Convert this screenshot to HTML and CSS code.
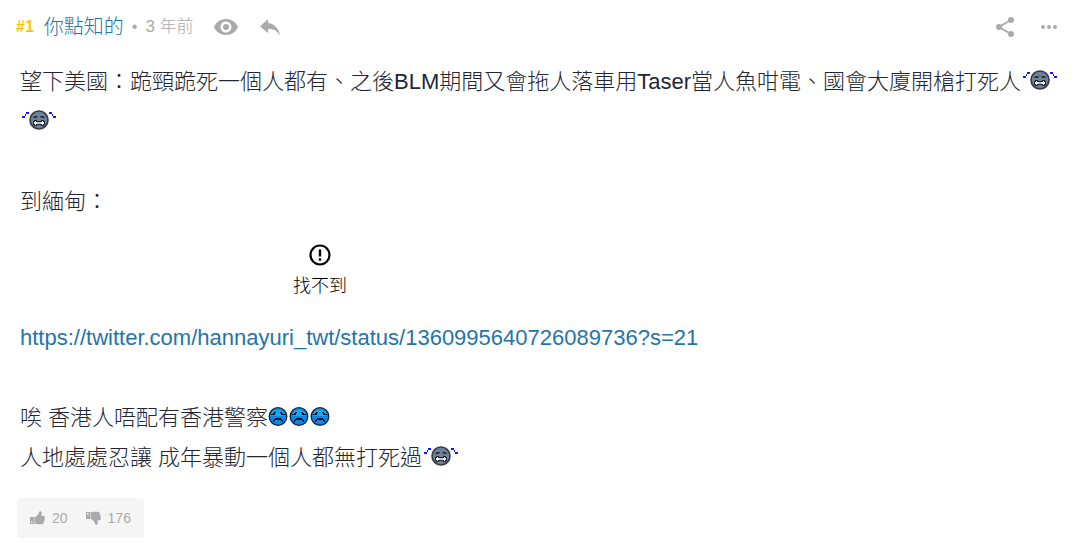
FILE: index.html
```html
<!DOCTYPE html>
<html lang="zh-HK">
<head>
    <meta charset="UTF-8">
    <meta name="viewport" content="width=device-width, initial-scale=1.0">
    <title>你點知的</title>
    <link rel="stylesheet" href="styles.css">
</head>
<body>

<!-- shared smileys -->
<svg class="sprite" aria-hidden="true">
    <symbol id="cry" viewBox="0 0 35 20">
        <g fill="#1414ff">
            <path d="M4 2h3v2H4zM0 6h3v2H0zM3 4h1v2H3zM27 2h3v2h-3zM31 6h3v2h-3zM30 4h1v2h-1z"/>
        </g>
        <circle cx="17" cy="10" r="9" fill="#6e819c" stroke="#343a42" stroke-width="1.6"/>
        <g>
            <path fill="#30363f" d="M12 6h4v1h-1v1h-4v-1h1zM18 6h4v1h1v1h-4v-1h-1z"/>
            <path fill="#20242a" d="M12 10h3v1h4v-1h3v1h1v4h-1v1h-3v-1h-4v1h-3v-1h-1v-4h1z"/>
            <path fill="#fff" d="M13 11h1v1h1v2h-1v1h-1v-1h-1v-2h1zM20 11h1v1h1v2h-1v1h-1v-1h-1v-2h1z"/>
            <path fill="#c4c8cc" d="M15 12h4v2h-4z"/>
        </g>
    </symbol>
    <symbol id="sad" viewBox="0 0 20 19">
        <circle cx="10" cy="9.5" r="8.8" fill="#0a86ea" stroke="#142434" stroke-width="1.3"/>
        <path fill="#10aaf6" d="M4 5q6-5 12 0l1 4h-14z"/>
        <g fill="#07121e">
            <path d="M6 5h2v1h-1v1h-2v1h-2v-1h2v-1h1zM12 5h2v1h1v1h2v1h-2v-1h-2v-1h-1zM5 7h2v1h-2zM13 7h2v1h-2z"/>
            <path d="M7 11h6v1h1v1h1v2h-1v-1h-1v-1h-6v1h-1v1h-1v-2h1v-1h1z"/>
        </g>
    </symbol>
</svg>

<article class="post">
    <header class="post-header">
        <span class="post-number">#1</span>
        <a class="post-author" href="#">你點知的</a>
        <span class="dot">•</span>
        <span class="post-time">3 年前</span>
        <button class="icon-btn view-btn" type="button" aria-label="只看此用戶">
            <svg width="24" height="18" viewBox="0 0 24 18">
                <path fill="currentColor" fill-rule="evenodd" d="M12 1C6.500 1 2 4.200 0 9c2 4.800 6.500 8 12 8s10-3.200 12-8C22 4.200 17.500 1 12 1zm0 13.500a5.500 5.500 0 1 1 0-11 5.500 5.500 0 0 1 0 11zM12 6a3 3 0 1 0 0 6 3 3 0 0 0 0-6z"/>
            </svg>
        </button>
        <button class="icon-btn" type="button" aria-label="回覆">
            <svg width="20" height="17" viewBox="0 0 20 17">
                <path fill="currentColor" d="M8 4V0L0 7.500 8 14v-4c5-.3 9 1.500 12 6.500C19 10.500 15.500 5 8 4z"/>
            </svg>
        </button>
        <div class="header-tools">
            <button class="icon-btn" type="button" aria-label="分享">
                <svg width="20" height="20" viewBox="0 0 20 20">
                    <path fill="none" stroke="currentColor" stroke-width="2" d="M16 3L4 10l12 7"/>
                    <g fill="currentColor"><circle cx="16" cy="3" r="3"/><circle cx="4" cy="10" r="3"/><circle cx="16" cy="17" r="3"/></g>
                </svg>
            </button>
            <button class="icon-btn" type="button" aria-label="更多">
                <svg width="16" height="4" viewBox="0 0 16 4" fill="currentColor">
                    <circle cx="2" cy="2" r="2"/><circle cx="8" cy="2" r="2"/><circle cx="14" cy="2" r="2"/>
                </svg>
            </button>
        </div>
    </header>

    <div class="post-body">
        <p>望下美國：跪頸跪死一個人都有、之後BLM期間又會拖人落車用Taser當人魚咁電、國會大廈開槍打死人<svg class="smiley cry"><use href="#cry"/></svg><wbr><svg class="smiley cry"><use href="#cry"/></svg></p>
        <br>
        <p>到緬甸：</p>
        <div class="missing-image">
            <svg width="22" height="22" viewBox="0 0 22 22">
                <circle cx="11" cy="11" r="9.500" fill="none" stroke="#000" stroke-width="2.200"/>
                <path fill="#000" d="M9.800 5.500h2.400v7H9.800zM9.800 14.300h2.400v2.400H9.800z"/>
            </svg>
            <span>找不到</span>
        </div>
        <p><a href="https://twitter.com/hannayuri_twt/status/1360995640726089736?s=21">https://twitter.com/hannayuri_twt/status/1360995640726089736?s=21</a></p>
        <br>
        <p>唉 香港人唔配有香港警察<svg class="smiley sad"><use href="#sad"/></svg><svg class="smiley sad"><use href="#sad"/></svg><svg class="smiley sad"><use href="#sad"/></svg></p>
        <p>人地處處忍讓 成年暴動一個人都無打死過<svg class="smiley cry"><use href="#cry"/></svg></p>
    </div>

    <footer class="votes">
        <button class="vote-btn" type="button" aria-label="正評 20">
            <svg width="15" height="14" viewBox="0 0 15 14">
                <path fill="currentColor" fill-rule="evenodd" d="M0 6h4.500v7H0zM1 10.500v1.500h1.500v-1.500zM5 6c2.500-1.300 3.600-2.500 4-5 .3-1.300 2.600-1.100 2.800.8.100 1.200-.2 2.100-.6 2.900h2.400c1.300.2 1.400 1.700.8 2.200.6.700.5 1.700-.1 2.100.3.800 0 1.600-.6 1.900.1 1.100-.4 2.300-1.700 2.300H8.500c-1.400 0-2.300-.4-3.500-.8z"/>
            </svg>
            20
        </button>
        <button class="vote-btn" type="button" aria-label="負評 176">
            <svg width="15" height="14" viewBox="0 0 15 14">
                <path fill="currentColor" fill-rule="evenodd" d="M0 1h4.500v7H0zM1 2v1.500h1.500V2zM5 8c2.500 1.300 3.600 2.500 4 5 .3 1.300 2.600 1.100 2.800-.8.100-1.200-.2-2.100-.6-2.900h2.400c1.300-.2 1.400-1.700.8-2.200.6-.7.5-1.700-.1-2.100.3-.8 0-1.600-.6-1.900C13.800 2 13.300.8 12 .8H8.500c-1.400 0-2.300.4-3.500.8z"/>
            </svg>
            176
        </button>
    </footer>
</article>

</body>
</html>
```

FILE: styles.css
```css
body {
    margin: 0;
    background-color: #fff;
    color: #222533;
    font-family: "Liberation Sans", "Noto Sans CJK TC", sans-serif;
    font-weight: 300;
}

a {
    color: #2574a9;
    text-decoration: none;
}

a:hover {
    text-decoration: underline;
}

.sprite {
    position: absolute;
    width: 0;
    height: 0;
}

.post {
    padding: 0 16px 14px;
}

.post-header {
    display: flex;
    align-items: center;
    height: 54px;
    color: #aaa;
}

.post-number {
    margin-right: 10px;
    color: #fbc308;
    font-size: 16px;
    font-weight: bold;
}

.post-author {
    font-size: 20px;
    line-height: 24px;
}

.dot {
    margin: 0 8px;
    font-size: 16px;
}

.post-time {
    font-size: 17px;
    line-height: 20px;
}

.icon-btn {
    display: flex;
    padding: 0;
    border: none;
    background: none;
    color: #aaa;
    cursor: pointer;
}

.view-btn {
    margin: 0 22px 0 20px;
}

.header-tools {
    display: flex;
    align-items: center;
    gap: 26px;
    margin-left: auto;
    padding-right: 4px;
}

.post-body {
    padding: 8px 0 0 4px;
    font-size: 22px;
    line-height: 40px;
}

.post-body p {
    margin: 0;
}

.smiley {
    vertical-align: middle;
    margin-bottom: 6px;
}

.cry {
    width: 35px;
    height: 20px;
    margin-left: 2px;
}

.sad {
    width: 20px;
    height: 19px;
    margin-right: 1px;
}

.missing-image {
    display: flex;
    flex-direction: column;
    align-items: center;
    gap: 8px;
    max-width: 600px;
    padding: 22px 0 20px;
    color: #000;
    font-size: 18px;
    line-height: 24px;
}

.votes {
    display: inline-flex;
    align-items: center;
    gap: 18px;
    height: 40px;
    margin: 20px 0 0 1px;
    padding: 0 13px;
    border-radius: 4px;
    background-color: #f5f5f5;
}

.vote-btn {
    display: flex;
    align-items: center;
    gap: 7px;
    padding: 0;
    border: none;
    background: none;
    color: #aaa;
    font-family: inherit;
    font-size: 14px;
    cursor: pointer;
}
```
